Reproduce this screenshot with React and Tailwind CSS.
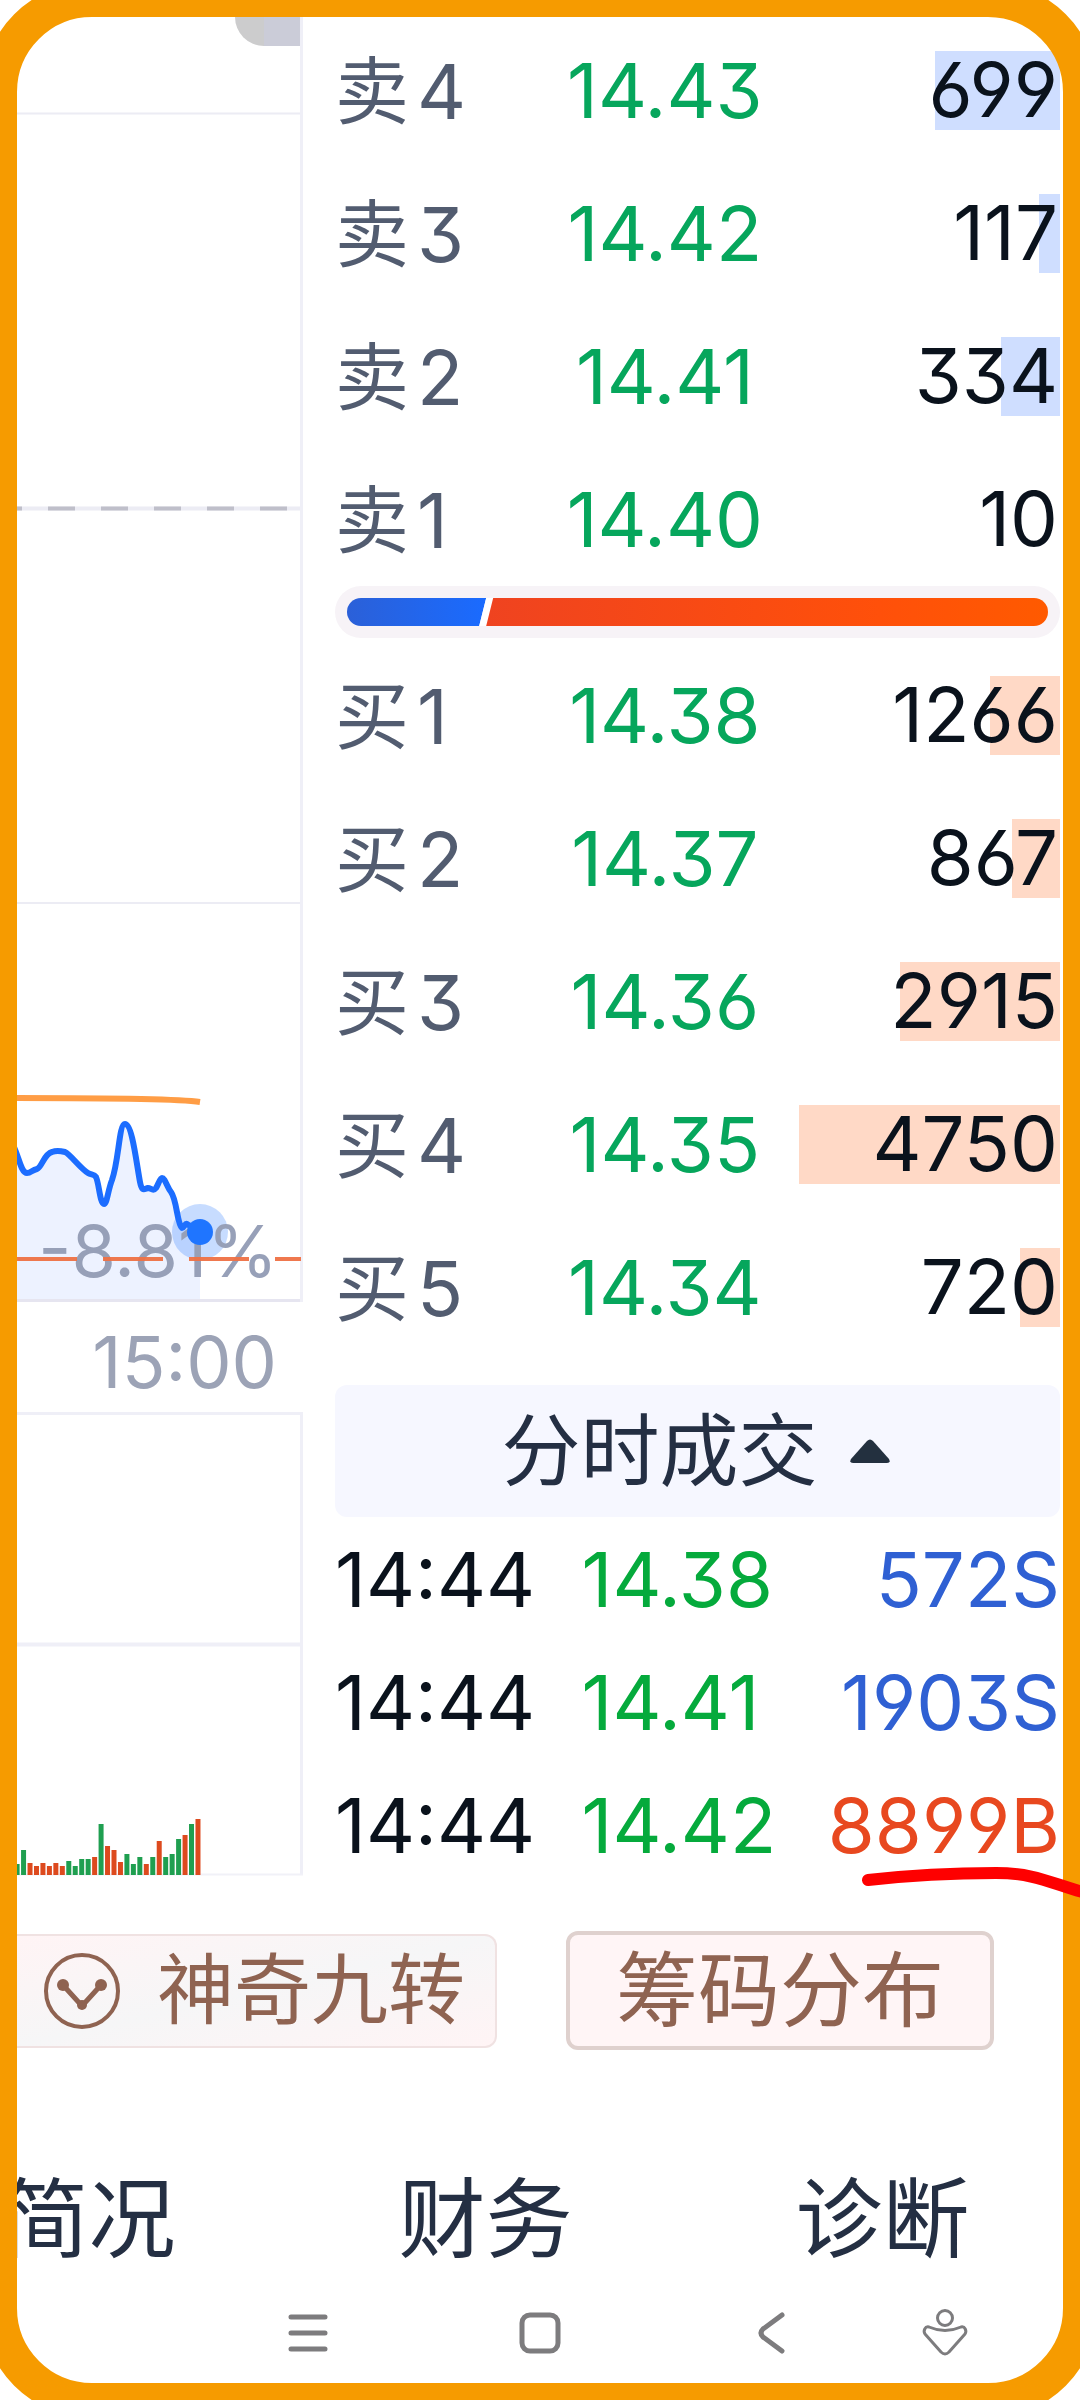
const asks = [
  { label: '卖', level: 4, price: '14.43', volume: 699 },
  { label: '卖', level: 3, price: '14.42', volume: 117 },
  { label: '卖', level: 2, price: '14.41', volume: 334 },
  { label: '卖', level: 1, price: '14.40', volume: 10 },
];

const bids = [
  { label: '买', level: 1, price: '14.38', volume: 1266 },
  { label: '买', level: 2, price: '14.37', volume: 867 },
  { label: '买', level: 3, price: '14.36', volume: 2915 },
  { label: '买', level: 4, price: '14.35', volume: 4750 },
  { label: '买', level: 5, price: '14.34', volume: 720 },
];

const trades = [
  { time: '14:44', price: '14.38', volume: '572S', tone: 'text-[#2f60d3]' },
  { time: '14:44', price: '14.41', volume: '1903S', tone: 'text-[#2f60d3]' },
  { time: '14:44', price: '14.42', volume: '8899B', tone: 'text-[#e8481f]' },
];

// Minute volumes: [height, rising]
const volumes = [
  [11, 0], [25, 0], [12, 1], [9, 1], [12, 1], [9, 1], [12, 1], [9, 1], [14, 0], [9, 0],
  [16, 0], [16, 0], [18, 1], [51, 0], [29, 1], [25, 1], [13, 1], [21, 0], [11, 0], [18, 0],
  [11, 1], [18, 0], [34, 1], [18, 0], [21, 0], [36, 0], [40, 1], [51, 0], [56, 1],
];

const numeric = "[font-feature-settings:'cv03','cv04','cv09']";

function PriceChart() {
  const line =
    'M10 1140C18 1150 20 1173 27 1173C31 1173 32 1170 37 1169C42 1167 44 1154 52 1152C57 1150 61 1151 65 1152C70 1154 80 1168 88 1173C91 1175 94 1174 96 1177C99 1183 100 1204 104 1204C107 1204 108 1190 112 1180C119 1160 119 1124 125 1124C132 1124 136 1160 140 1182C142 1192 144 1189 148 1188C151 1188 153 1192 156 1188C158 1185 160 1178 162 1178C165 1178 167 1187 171 1192C177 1200 177 1224 182 1228C184 1228 185 1223 187 1224L200 1232';
  return (
    <svg viewBox="17 17 286 1285" className="block w-full" role="img" aria-label="分时走势">
      <path d="M235 17A29 29 0 0 0 264 46H301V17Z" fill="#cccccd" />
      <path d="M264 17H301V46H264Z" fill="#cbccd8" />
      <g stroke="#ececf4" strokeWidth="2">
        <path d="M17 113.500H301M17 903H301" />
        <path d="M17 508.500H301" strokeWidth="4" />
      </g>
      <path d="M-5 508.500H301" stroke="#bfbfca" strokeWidth="4" strokeDasharray="27 26" />
      <path d={line + 'V1300H10Z'} fill="#edf2ff" />
      <path d="M17 1300.500H303" stroke="#e6e5f0" strokeWidth="3" />
      <path d="M301.500 17V1302" stroke="#efeff7" strokeWidth="3" />
      <path d="M17 1098C80 1098 180 1099 200 1102" fill="none" stroke="#ff9d45" strokeWidth="6" />
      <path d={line} fill="none" stroke="#1c6dff" strokeWidth="6" strokeLinejoin="round" />
      <circle cx="200" cy="1232" r="28" fill="#2876ff" fillOpacity="0.26" />
      <text x="278" y="1277" textAnchor="end" fill="#97a0b8" fontSize="72">
        -8.81%
      </text>
      <path d="M17 1259H301" stroke="#ee7145" strokeOpacity="0.95" strokeWidth="4" strokeDasharray="60 26" />
      <circle cx="200" cy="1232" r="13" fill="#1f75ff" />
    </svg>
  );
}

function VolumeChart() {
  return (
    <svg viewBox="17 1411 286 465" className="block w-full" role="img" aria-label="成交量">
      <path d="M17 1413.500H301.500V1874.500" fill="none" stroke="#efeff7" strokeWidth="3" />
      <path d="M17 1644.500H301" stroke="#efeff7" strokeWidth="4" />
      <path d="M17 1874.500H303" stroke="#f1f1f8" strokeWidth="2" />
      {volumes.map(([h, up], i) => (
        <rect
          key={i}
          x={14.6 + i * 6.46}
          y={1875 - h}
          width="5"
          height={h}
          fill={up ? '#dd4a1e' : '#1f9f50'}
        />
      ))}
    </svg>
  );
}

function Book({ rows, max, tint, name }) {
  return (
    <table className="w-full table-fixed border-collapse" aria-label={name}>
      <colgroup>
        <col className="w-[27%]" />
        <col className="w-[37%]" />
        <col className="w-[36%]" />
      </colgroup>
      <tbody>
        {rows.map((r) => (
          <tr key={r.level} className="[&:not(:last-child)>*]:pb-16">
            <th scope="row" className="p-0 text-left font-normal text-[#525c70]">
              <div className="flex h-[76px] items-center gap-2 leading-none">
                <span className="text-[74px]">{r.label}</span>
                <span>{r.level}</span>
              </div>
            </th>
            <td className="p-0 text-center text-[#06a65c]">
              <div className="h-[79px] leading-[79px]">{r.price}</div>
            </td>
            <td className="p-0 text-right text-[#0a121c]">
              <div className="relative h-[79px] pr-0.5 leading-[76px]">
                <div
                  className={`absolute inset-y-0 right-0 ${tint}`}
                  style={{ width: `${r.volume > 20 ? (r.volume / max) * 100 : 0}%` }}
                />
                <span className="relative">{r.volume}</span>
              </div>
            </td>
          </tr>
        ))}
      </tbody>
    </table>
  );
}

function RatioBar() {
  return (
    <div className="mt-[27px] rounded-full bg-[#f7f3f7] p-3">
      <svg viewBox="0 0 700 28" preserveAspectRatio="none" className="block h-7 w-full" role="img" aria-label="买卖比例">
        <defs>
          <linearGradient id="sell">
            <stop offset="0" stopColor="#2b60d8" />
            <stop offset="1" stopColor="#1a6bff" />
          </linearGradient>
          <linearGradient id="buy">
            <stop offset="0" stopColor="#ef4320" />
            <stop offset="0.7" stopColor="#ff500a" />
            <stop offset="1" stopColor="#ff5a00" />
          </linearGradient>
        </defs>
        <path d="M14 0H139L132 28H14A14 14 0 0 1 14 0Z" fill="url(#sell)" />
        <path d="M139 0H146L139 28H132Z" fill="#fff" />
        <path d="M146 0H686A14 14 0 0 1 686 28H139Z" fill="url(#buy)" />
      </svg>
    </div>
  );
}

export default function App() {
  return (
    <div
      className={`relative min-h-screen overflow-hidden bg-white p-[17px] font-[Inter,'Noto_Sans_CJK_SC',sans-serif] text-[76px] ${numeric}`}
    >
      <main className="flex">
        <section className="w-[286px] shrink-0">
          <PriceChart />
          <div className="h-[109px] pr-[26px] text-right text-[72px] leading-[120px] text-[#9ca3b6]">15:00</div>
          <VolumeChart />
        </section>

        <section className="min-w-0 flex-1 pt-[34px] pr-[3px] pl-8">
          <Book rows={asks} max={1465} tint="bg-[#cfdeff]" name="卖盘" />
          <RatioBar />
          <div className="mt-[38px]">
            <Book rows={bids} max={4750} tint="bg-[#ffd9c6]" name="买盘" />
          </div>
          <button
            type="button"
            className="mt-[58px] flex h-[132px] w-full items-center justify-center gap-8 rounded-xl bg-[#f6f7ff] pr-1 text-[79px] leading-none text-[#242f43]"
          >
            分时成交
            <svg viewBox="0 0 40 24" className="h-6 w-10" aria-hidden="true">
              <path d="M17 2Q20 -1 23 2L39 20Q41 24 37 24H3Q-1 24 1 20Z" fill="#23303f" />
            </svg>
          </button>
          <table className="w-full table-fixed border-collapse" aria-label="分时成交">
            <colgroup>
              <col className="w-[34%]" />
              <col className="w-[29%]" />
              <col className="w-[37%]" />
            </colgroup>
            <tbody>
              {trades.map((t) => (
                <tr key={t.price} className="h-[123px] leading-none">
                  <td className="p-0 whitespace-nowrap text-[#0a121c]">{t.time}</td>
                  <td className="p-0 text-[#05aa3c]">{t.price}</td>
                  <td className={`p-0 text-right ${t.tone}`}>{t.volume}</td>
                </tr>
              ))}
            </tbody>
          </table>
        </section>
      </main>

      <div className="mt-[45px] flex items-center gap-[69px] text-[#8f6351]">
        <button
          type="button"
          className="flex h-[114px] w-[480px] shrink-0 items-center justify-end gap-9 rounded-r-xl border-2 border-l-0 border-[#f0e2e2] bg-linear-to-br from-[#fff4f5] via-[#f6f6f7] to-[#fff4f5] pr-[30px] text-[77px] leading-none"
        >
          <svg viewBox="0 0 78 78" className="size-[78px]" fill="none" stroke="currentColor" aria-hidden="true">
            <circle cx="39" cy="39" r="36" strokeWidth="4" />
            <path d="M20 33L39 54L58 33" strokeWidth="5" />
            <circle cx="20" cy="33" r="6" fill="currentColor" stroke="none" />
            <circle cx="58" cy="33" r="6" fill="currentColor" stroke="none" />
            <circle cx="39" cy="53" r="5" fill="currentColor" stroke="none" />
          </svg>
          <span>神奇九转</span>
        </button>
        <button
          type="button"
          className="h-[119px] w-[428px] shrink-0 rounded-xl border-4 border-[#dfd1ce] bg-[#fff5f6] text-[82px] leading-none"
        >
          筹码分布
        </button>
      </div>

      <nav className="-mr-[18px] -ml-[127px] mt-[120px] grid grid-cols-3 text-center text-[87px] leading-[100px] text-[#242f43]" aria-label="资料">
        <a href="#profile">简况</a>
        <a href="#finance">财务</a>
        <a href="#diagnosis">诊断</a>
      </nav>

      <nav
        className="mt-[39px] grid grid-cols-[175fr_232fr_232fr_232fr_114fr_61fr] text-[#7d7c7e]"
        aria-label="系统导航"
      >
        <button type="button" aria-label="菜单" className="col-start-2 flex justify-center">
          <svg viewBox="0 0 48 48" className="size-12" fill="none" stroke="currentColor" strokeWidth="5" strokeLinecap="round">
            <path d="M7 8H41M7 24H41M7 40H41" />
          </svg>
        </button>
        <button type="button" aria-label="主页" className="flex justify-center">
          <svg viewBox="0 0 48 48" className="size-12" fill="none" stroke="currentColor" strokeWidth="5">
            <rect x="6" y="6" width="36" height="36" rx="8" />
          </svg>
        </button>
        <button type="button" aria-label="返回" className="flex justify-center">
          <svg viewBox="0 0 48 48" className="size-12" fill="none" stroke="currentColor" strokeWidth="5" strokeLinecap="round">
            <path d="M34 6L15 20Q11 24 15 28L34 42" />
          </svg>
        </button>
        <button type="button" aria-label="辅助功能" className="flex justify-center">
          <svg viewBox="0 0 48 48" className="size-12" fill="none" stroke="currentColor" strokeWidth="3">
            <circle cx="24" cy="9" r="7.500" />
            <path d="M8 18Q24 25 40 18C44 17 46 22 44 25L28 43Q24 47 20 43L4 25C2 22 4 17 8 18Z" strokeLinejoin="round" />
          </svg>
        </button>
      </nav>

      <div className="pointer-events-none absolute -inset-[18px] rounded-[110px] border-[35px] border-[#f69b00]" />
      <svg
        viewBox="0 0 220 36"
        className="pointer-events-none absolute top-[1864px] right-0 h-9 w-[220px]"
        fill="none"
        stroke="#fe0000"
        strokeWidth="12"
        strokeLinecap="round"
        aria-hidden="true"
      >
        <path d="M8 16Q70 9 136 9C176 9 192 20 226 29" />
      </svg>
    </div>
  );
}
